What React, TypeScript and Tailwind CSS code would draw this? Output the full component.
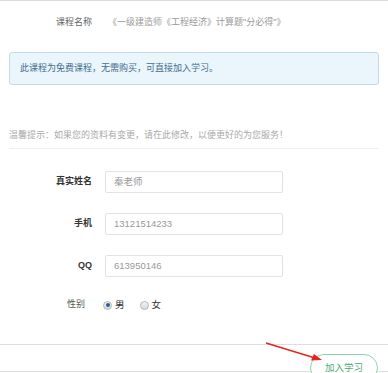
import React from 'react'

const font = { fontFamily: '"Liberation Sans", "Noto Sans CJK SC", sans-serif' }

const Field = ({ label, value }: { label: string; value: string }) => (
  <div className="flex items-center h-[22px]">
    <p className="w-[92px] text-right text-[9px] font-bold text-[#333]">{label}</p>
    <div className="ml-[13px] w-[178px] h-[22px] border border-[#e2e2e2] rounded-[2px] flex items-center px-[8px] text-[9.5px] text-[#999]">
      {value}
    </div>
  </div>
)

const Radio = ({ checked }: { checked?: boolean }) => (
  <span className="w-[9px] h-[9px] rounded-full border border-[#b5b5b5] bg-gradient-to-b from-[#f4f4f4] to-[#d8d8d8] flex items-center justify-center">
    {checked && <span className="w-[4px] h-[4px] rounded-full bg-[#1f5f9e]"></span>}
  </span>
)

export default function App() {
  return (
    <div className="relative w-[388px] h-[373px] overflow-hidden bg-white border-t border-[#dcdcdc]" style={font}>
      <div className="h-[43px] flex items-center text-[9px]">
        <p className="w-[92px] text-right text-[#666]">课程名称</p>
        <p className="ml-[16px] text-[#999]">《一级建造师《工程经济》计算题"分必得"》</p>
      </div>

      <div className="mx-[9px] mt-[8px] h-[33px] rounded-[3px] border border-[#c3dbe8] bg-[#ebf5fc] flex items-center px-[10px] text-[9px] text-[#3d6e8f]">
        此课程为免费课程，无需购买，可直接加入学习。
      </div>

      <p className="mx-[9px] mt-[44px] h-[12px] leading-[12px] text-[9px] text-[#aaa]">
        温馨提示：如果您的资料有变更，请在此修改，以便更好的为您服务！
      </p>
      <div className="mx-[9px] mt-[7px] border-b border-[#f1f1f1]"></div>

      <div className="mt-[22px] flex flex-col gap-[20px]">
        <Field label="真实姓名" value="秦老师" />
        <Field label="手机" value="13121514233" />
        <Field label="QQ" value="613950146" />
        <div className="flex items-center h-[16px]">
          <p className="w-[85px] text-right text-[9px] text-[#555]">性别</p>
          <div className="ml-[18px] flex items-center gap-[3px]">
            <Radio checked />
            <span className="text-[9.5px] text-[#333]">男</span>
          </div>
          <div className="ml-[15px] flex items-center gap-[3px]">
            <Radio />
            <span className="text-[9.5px] text-[#333]">女</span>
          </div>
        </div>
      </div>

      <div className="mt-[31px] border-t border-[#dddddd] h-[28px] border-b flex justify-end pr-[10px] pt-[9px]">
        <div className="w-[68px] h-[28px] shrink-0 rounded-full border border-[#8fd3ad] bg-white flex items-center justify-center text-[9.5px] text-[#4cae6e]">
          加入学习
        </div>
      </div>

      <svg className="absolute left-0 top-0 pointer-events-none" width="388" height="373">
        <line x1="266" y1="342" x2="315" y2="357" stroke="#e8231f" strokeWidth="1.5" />
        <polygon points="322,359 311,359.5 314,353" fill="#e8231f" />
      </svg>
    </div>
  )
}
